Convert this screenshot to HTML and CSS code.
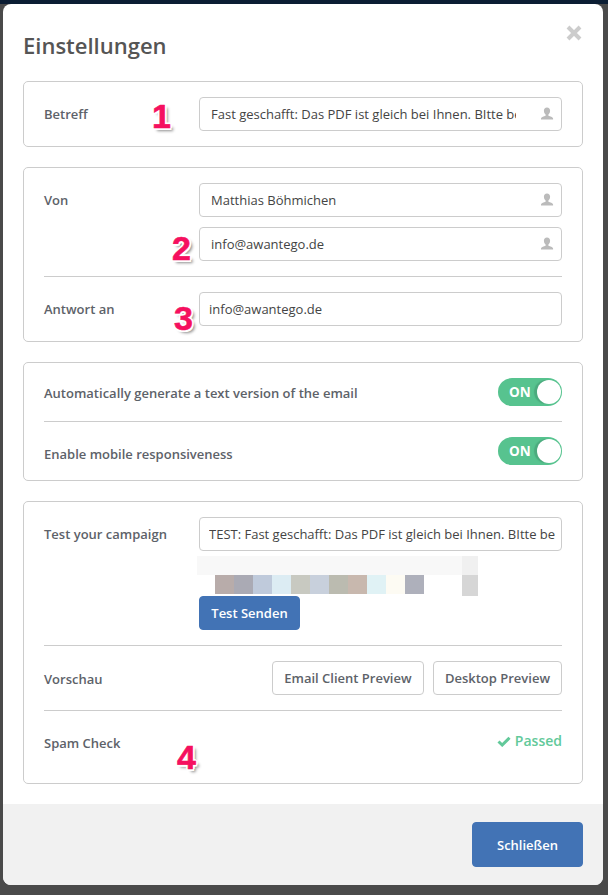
FILE: index.html
```html
<!DOCTYPE html>
<html lang="de">
<head>
<meta charset="utf-8">
<title>Einstellungen</title>
<link rel="stylesheet" href="styles.css">
</head>
<body>
<div class="modal">
  <div class="modal-body">
    <button class="close" aria-label="Schließen"><svg width="16" height="16" viewBox="0 0 16 16"><path d="M2 2 14 14M14 2 2 14" stroke="#cccccc" stroke-width="4" fill="none"/></svg></button>
    <h2 class="title">Einstellungen</h2>

    <section class="card card-subject">
      <div class="row">
        <label class="label">Betreff</label>
        <div class="field"><span class="field-text clip">Fast geschafft: Das PDF ist gleich bei Ihnen. BItte be</span><svg class="user" viewBox="0 0 14 14"><path d="M7 0.5c2 0 3.100 1.400 3.100 3.300 0 1.600-.8 3-1.700 3.600v1.300c1.900.7 4.300 1.500 4.600 2.400.1.400.1 1 .1 1.400H1c0-.4 0-1 .1-1.400.3-.9 2.700-1.700 4.500-2.400V7.400C4.700 6.800 3.900 5.400 3.900 3.800 3.900 1.900 5 .5 7 .5z" fill="#bbbbbb"/></svg></div>
      </div>
    </section>

    <section class="card card-from">
      <div class="row row-top">
        <label class="label label-top">Von</label>
        <div class="stack">
          <div class="field"><span class="field-text clip">Matthias Böhmichen</span><svg class="user" viewBox="0 0 14 14"><path d="M7 0.5c2 0 3.100 1.400 3.100 3.300 0 1.600-.8 3-1.700 3.600v1.300c1.900.7 4.300 1.500 4.600 2.400.1.400.1 1 .1 1.400H1c0-.4 0-1 .1-1.400.3-.9 2.700-1.700 4.500-2.400V7.400C4.700 6.800 3.900 5.400 3.900 3.800 3.900 1.900 5 .5 7 .5z" fill="#bbbbbb"/></svg></div>
          <div class="field"><span class="field-text clip">info@awantego.de</span><svg class="user" viewBox="0 0 14 14"><path d="M7 0.5c2 0 3.100 1.400 3.100 3.300 0 1.600-.8 3-1.700 3.600v1.300c1.900.7 4.300 1.500 4.600 2.400.1.400.1 1 .1 1.400H1c0-.4 0-1 .1-1.400.3-.9 2.700-1.700 4.500-2.400V7.400C4.700 6.800 3.900 5.400 3.900 3.800 3.900 1.900 5 .5 7 .5z" fill="#bbbbbb"/></svg></div>
        </div>
      </div>
      <hr class="rule rule-from">
      <div class="row">
        <label class="label">Antwort an</label>
        <div class="field field-plain"><span class="field-text">info@awantego.de</span></div>
      </div>
    </section>

    <section class="card card-toggles">
      <div class="row row-toggle">
        <span class="label label-wide label-first">Automatically generate a text version of the email</span>
        <span class="toggle"><span class="toggle-text">ON</span><span class="knob"></span></span>
      </div>
      <hr class="rule rule-toggle">
      <div class="row row-toggle">
        <span class="label label-wide label-second">Enable mobile responsiveness</span>
        <span class="toggle"><span class="toggle-text">ON</span><span class="knob"></span></span>
      </div>
    </section>

    <section class="card card-test">
      <div class="row row-top">
        <label class="label label-top">Test your campaign</label>
        <div class="stack-test">
          <div class="field field-plain"><span class="field-text">TEST: Fast geschafft: Das PDF ist gleich bei Ihnen. BItte be</span></div>
          <div class="blur" aria-hidden="true">
            <div class="blur-row blur-row-a"><span class="blur-wide"></span><span class="blur-end-a"></span></div>
            <div class="blur-row blur-row-b">
              <span class="px px-lead"></span><span class="px c1"></span><span class="px c2"></span><span class="px c3"></span><span class="px c4"></span><span class="px c5"></span><span class="px c6"></span><span class="px c7"></span><span class="px c8"></span><span class="px c9"></span><span class="px c10"></span><span class="px c11"></span><span class="blur-gap"></span><span class="blur-end-b"></span>
            </div>
          </div>
          <button class="btn btn-primary btn-send">Test Senden</button>
        </div>
      </div>
      <hr class="rule rule-test1">
      <div class="row row-preview">
        <span class="label label-preview">Vorschau</span>
        <div class="btn-group"><button class="btn btn-default btn-email">Email Client Preview</button><button class="btn btn-default">Desktop Preview</button></div>
      </div>
      <hr class="rule rule-test2">
      <div class="row row-spam">
        <span class="label">Spam Check</span>
        <span class="passed"><svg width="14" height="11" viewBox="0 0 14 11"><path d="M1.500 5.500 5.200 9 12.500 1.800" stroke="#62c99a" stroke-width="3" fill="none"/></svg>Passed</span>
      </div>
    </section>
  </div>
  <div class="modal-footer"><button class="btn btn-primary btn-close">Schließen</button></div>
</div>
<span class="mark mark-1">1</span>
<span class="mark mark-2">2</span>
<span class="mark mark-3">3</span>
<span class="mark mark-4">4</span>
</body>
</html>
```
FILE: styles.css
```css
* { box-sizing: border-box; }
html, body { margin: 0; height: 100%; }
body {
  position: relative;
  height: 895px;
  overflow: hidden;
  padding: 4px 5px 0 3px;
  background: linear-gradient(#0b1d33 0 4px, #4a4a4a 4px);
  font-family: "Open Sans", sans-serif;
  color: #555b63;
}
.modal {
  height: 881px;
  background: #fff;
  border-radius: 8px;
  overflow: hidden;
  display: flex;
  flex-direction: column;
}
.modal-body { position: relative; flex: 1; padding: 25px 20px 0; }
.close {
  position: absolute; top: 21px; right: 21px;
  padding: 0; border: 0; background: none; width: 16px; height: 16px; display: block;
}
.close svg { display: block; }
.title { margin: 0 0 19px; font-size: 22px; line-height: 33px; font-weight: 600; color: #555; height: 33px; }
.card { border: 1px solid #ccc; border-radius: 5px; padding: 15px 20px; margin-bottom: 20px; }
.card-subject { height: 66px; }
.card-from { height: 175px; }
.card-toggles { height: 119px; }
.card-test { height: 283px; }
.row { display: flex; align-items: center; }
.row-top { align-items: flex-start; }
.label { width: 155px; flex: none; font-size: 13px; font-weight: 600; color: #5d6269; line-height: 34px; }
.label-wide { width: auto; flex: 1; line-height: 28px; }
.label-first { padding-top: 1px; }
.label-second { padding-top: 3px; }
.label-preview { padding-top: 1px; }
.field {
  flex: none; width: 363px; height: 34px; border: 1px solid #ccc; border-radius: 4px;
  display: flex; align-items: center; justify-content: space-between;
  padding: 0 6px 0 11px; background: #fff;
}
.field-plain { padding: 0 0 0 9px; }
.field-text { font-size: 13px; color: #444; white-space: nowrap; overflow: hidden; }
.clip { width: 305px; }
.user { width: 16px; height: 14px; flex: none; }
.stack, .stack-test { flex: 1; display: flex; flex-direction: column; min-width: 0; }
.stack { gap: 10px; }
.rule { border: 0; border-top: 1px solid #ccc; margin: 0; }
.rule-from { margin: 15px 0; }
.rule-toggle { margin: 15px 0; }
.row-toggle { height: 28px; align-items: flex-start; }
.toggle {
  position: relative; flex: none; width: 64px; height: 28px; border-radius: 14px;
  background: #57c38f; display: block;
}
.toggle-text { position: absolute; left: 11px; top: 0; line-height: 28px; font-size: 13.500px; font-weight: 700; color: #fff; }
.knob {
  position: absolute; right: 1px; top: 2px; width: 24px; height: 24px; border-radius: 50%;
  background: #fff; box-shadow: -3px 0 1px #4cab7e;
}
.blur { margin: 5px 0 0 -2px; width: 281px; }
.blur-row { display: flex; height: 19px; }
.blur-wide { width: 265px; background: #f8f8f8; }
.blur-end-a { width: 16px; background: #f0f0f0; }
.px { width: 19px; }
.px-lead { width: 18px; }
.c1 { background: #b8acaa; }
.c2 { background: #aaaab4; }
.c3 { background: #bfcadb; }
.c4 { background: #dcecf3; }
.c5 { background: #c8c9c1; }
.c6 { background: #c8d0dc; }
.c7 { background: #bbbbb0; }
.c8 { background: #c8b8ae; }
.c9 { background: #e0f2f5; }
.c10 { background: #fdfbf3; }
.c11 { background: #aeb0bb; }
.blur-gap { width: 38px; }
.blur-end-b { width: 16px; height: 21px; background: #d6d6d6; flex: none; }
.btn { font-family: inherit; font-size: 13px; font-weight: 600; border-radius: 4px; cursor: pointer; }
.btn-primary { background: #4273b5; border: 1px solid #4273b5; color: #fff; }
.btn-default { background: #fff; border: 1px solid #ccc; color: #5d6269; height: 34px; padding: 0 11px; }
.btn-email { width: 152px; padding: 0; }
.btn-send { width: 101px; height: 34px; padding: 0; margin-top: 2px; }
.btn-group { margin-left: auto; display: flex; gap: 9px; }
.rule-test1 { margin: 15px 0; }
.rule-test2 { margin: 15px 0 0; }
.row-preview { height: 34px; }
.row-spam { height: 56px; justify-content: space-between; align-items: flex-start; padding-top: 15px; }
.passed { color: #62c99a; font-size: 14px; font-weight: 600; line-height: 30px; display: flex; align-items: center; gap: 4px; }
.modal-footer { height: 82px; background: #f1f1f1; display: flex; justify-content: flex-end; padding: 18px 20px 0; }
.btn-close { width: 111px; height: 45px; padding: 0; font-size: 13px; }
.mark {
  position: absolute; font-family: "Liberation Sans", sans-serif; font-weight: 700; font-size: 34px; line-height: 36px;
  color: #f5105f;
  -webkit-text-stroke: 0.6px #f5105f;
  text-shadow: 2px 0 0 #fff, -2px 0 0 #fff, 0 2px 0 #fff, 0 -2px 0 #fff, 1.500px 1.500px 0 #fff, -1.500px 1.500px 0 #fff, 1.500px -1.500px 0 #fff, -1.500px -1.500px 0 #fff, 3px 3px 3px rgba(0,0,0,.45);
}
.mark-1 { left: 152px; top: 98px; }
.mark-2 { left: 172px; top: 230px; }
.mark-3 { left: 174px; top: 300px; }
.mark-4 { left: 177px; top: 739px; }
```
